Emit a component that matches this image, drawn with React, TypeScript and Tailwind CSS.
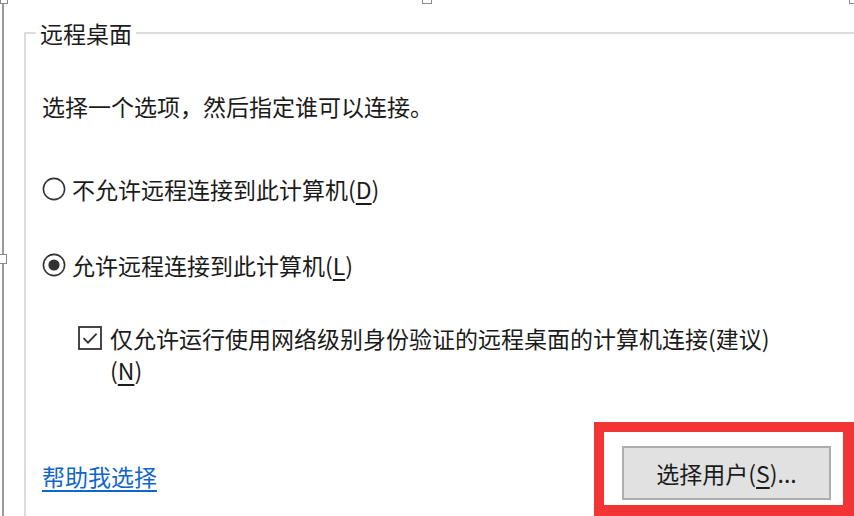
import React from 'react';

// Selection handle drawn over the image frame
function Handle({ className }: { className: string }) {
  return <div className={`absolute bg-white border border-[#8a8a8a] ${className}`} />;
}

function Radio({ checked }: { checked?: boolean }) {
  return (
    <svg width="24" height="24" viewBox="0 0 24 24" className="shrink-0">
      <circle cx="12" cy="12" r="10.6" fill="white" stroke="#333333" strokeWidth="1.6" />
      {checked && <circle cx="12" cy="12" r="5.6" fill="#333333" />}
    </svg>
  );
}

function Checkbox() {
  return (
    <svg width="24" height="24" viewBox="0 0 24 24" className="shrink-0">
      <rect x="1" y="1" width="22" height="22" fill="white" stroke="#333333" strokeWidth="1.8" />
      <path d="M5.5 12.2 L10 16.6 L18.6 7.6" fill="none" stroke="#333333" strokeWidth="1.8" />
    </svg>
  );
}

export default function App() {
  return (
    <div
      className="relative w-[854px] h-[516px] overflow-hidden bg-white text-[23px] text-[#1b1b1b]"
      style={{ fontFamily: '"Noto Sans CJK SC", "Microsoft YaHei", sans-serif' }}
    >
      <div className="ml-[2px] h-full border-l-2 border-[#9c9c9c] pl-[20px] pt-[32px]">
        {/* group box */}
        <div className="h-full border-l-2 border-t-2 border-[#dcdcdc] pl-[16px]">
          <div className="-mt-[16px] -ml-[6px] w-fit bg-white px-[4px] leading-[30px]">远程桌面</div>

          <p className="mt-[43px] leading-[30px]">选择一个选项，然后指定谁可以连接。</p>

          <label className="mt-[53px] flex h-[30px] items-center gap-[6px]">
            <Radio />
            <span>
              不允许远程连接到此计算机(<u className="underline-offset-4">D</u>)
            </span>
          </label>

          <label className="mt-[46px] flex h-[30px] items-center gap-[6px]">
            <Radio checked />
            <span>
              允许远程连接到此计算机(<u className="underline-offset-4">L</u>)
            </span>
          </label>

          <label className="mt-[42px] ml-[36px] flex items-start gap-[8px] leading-[32px]">
            <span className="mt-[4px]">
              <Checkbox />
            </span>
            <span>
              仅允许运行使用网络级别身份验证的远程桌面的计算机连接(建议)
              <br />(<u className="underline-offset-4">N</u>)
            </span>
          </label>

          <div className="mt-[36px] flex items-start justify-between">
            <a href="#" className="mt-[39px] leading-[30px] text-[#1166cc] underline underline-offset-4">
              帮助我选择
            </a>
            <div className="h-[94px] w-[260px] border-[10px] border-r-[11px] border-b-[11px] border-[#f23434] pl-[18px] pt-[14px]">
              <button className="flex h-[54px] w-[209px] items-center justify-center border-2 border-[#adadad] bg-[#e1e1e1] leading-[30px]">
                选择用户(<u className="underline-offset-4">S</u>)...
              </button>
            </div>
          </div>
        </div>
      </div>

      <Handle className="left-0 top-[-4px] h-[8px] w-[8px]" />
      <Handle className="left-[422px] top-[-6px] h-[10px] w-[10px]" />
      <Handle className="left-[849px] top-[-6px] h-[10px] w-[10px]" />
      <Handle className="left-[-2px] top-[254px] h-[10px] w-[9px]" />
    </div>
  );
}
